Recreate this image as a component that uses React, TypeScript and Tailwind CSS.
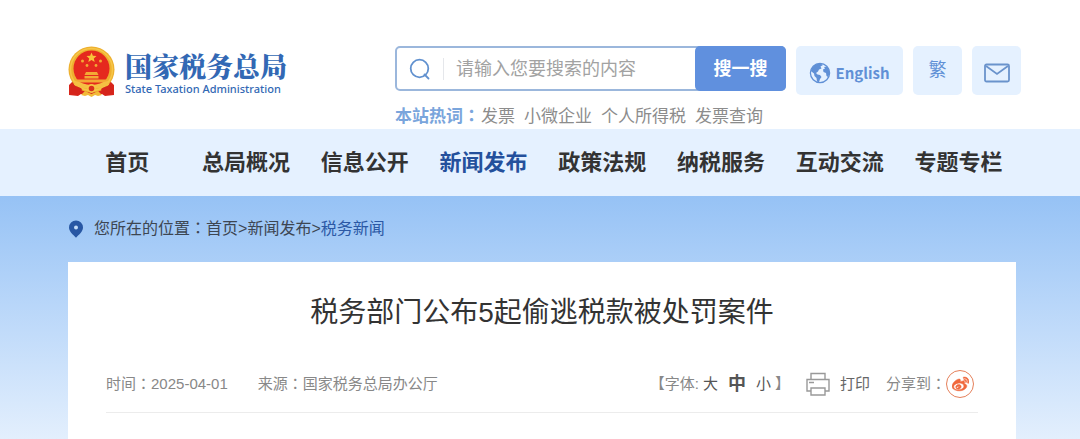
import clsx from "clsx";
import { type ReactNode } from "react";
import { FaWeibo } from "react-icons/fa";

interface NavItem {
  readonly label: string;
  readonly active?: boolean;
}

const NAV_ITEMS: NavItem[] = [
  { label: "首页" },
  { label: "总局概况" },
  { label: "信息公开" },
  { label: "新闻发布", active: true },
  { label: "政策法规" },
  { label: "纳税服务" },
  { label: "互动交流" },
  { label: "专题专栏" },
];

const HOT_WORDS = ["发票", "小微企业", "个人所得税", "发票查询"];

const Emblem = (): JSX.Element => (
  <svg viewBox="0 0 47 51" className="h-[51px] w-[47px] shrink-0" aria-hidden="true">
    <path d="M6 34 1 39v10l9 1 3-2h21l3 2 9-1V39l-5-5z" fill="#d8261c" />
    <circle cx="23.5" cy="23.5" r="23" fill="#eeb02f" />
    <circle cx="23.5" cy="23.5" r="21" fill="none" stroke="#f6c648" strokeWidth="1.5" />
    <circle cx="23.5" cy="22.5" r="18" fill="#e5291e" />
    <path d="m23.5 6.5 1.4 3.3 3.6.3-2.7 2.3.9 3.5-3.2-1.9-3.2 1.9.9-3.5-2.7-2.3 3.6-.3z" fill="#f8c33a" />
    <g fill="#f3a935">
      <circle cx="14.5" cy="15" r="1.5" />
      <circle cx="32.5" cy="15" r="1.5" />
      <circle cx="19" cy="19.5" r="1.4" />
      <circle cx="28" cy="19.5" r="1.4" />
      <path d="M18 26h11l1.5 3h-14zM16.5 30h14v2.5h-14zM9 33.5h29v3H9z" />
    </g>
    <path d="M7 35c6 1 10 4 16.5 4S34 36 40 35l1 4c-6 1-9 4-17.5 4S12 40 6 39z" fill="#f5c043" />
    <path d="M3 39c5 1 9 2 11 4l-3 6-9-1zM44 39c-5 1-9 2-11 4l3 6 9-1z" fill="#d5241b" />
    <circle cx="23.5" cy="42.5" r="3.6" fill="#d9301d" stroke="#f6c544" strokeWidth="1.6" />
    <path d="m13 49 4-4 6.5 3 6.5-3 4 4-4 1-3-1-3.5 2-3.5-2-3 1z" fill="#f2ba38" />
  </svg>
);

const SearchIcon = (): JSX.Element => (
  <svg
    viewBox="0 0 22 22"
    className="size-[22px] shrink-0"
    fill="none"
    stroke="#6191cf"
    strokeWidth="1.8"
    aria-hidden="true"
  >
    <circle cx="10.5" cy="10.5" r="8.8" />
    <path d="m15.5 16.5 4 4" strokeLinecap="round" />
  </svg>
);

const GlobeIcon = (): JSX.Element => (
  <svg viewBox="0 0 22 22" className="size-[22px] shrink-0" aria-hidden="true">
    <circle cx="11" cy="11" r="9.6" fill="none" stroke="#6090d6" strokeWidth="1.3" />
    <path
      d="M1.8 9C3 4.5 6.5 1.6 11.5 1.5L14 3l-2.5 1.500 1 2-2.500 1-1 2-2 1.500 1.500 1.500 2.500.5 1.500 2-1.500 2-1 3.200-2-.7-.5-3.500-2-2-.5-2.500z"
      fill="#6090d6"
    />
    <path d="m15 5 3-.5c2 2 2.700 4.500 2.500 7.500L19 15l-1.500-1-.5-3-2.500-1-.5-2.500 2-1z" fill="#6090d6" />
  </svg>
);

const MailIcon = (): JSX.Element => (
  <svg
    viewBox="0 0 26 20"
    className="h-5 w-[26px]"
    fill="none"
    stroke="#6a93cc"
    strokeWidth="1.8"
    aria-hidden="true"
  >
    <rect x="1" y="1.5" width="24" height="17" rx="1.5" />
    <path d="m2 3 11 8 11-8" />
  </svg>
);

const PinIcon = (): JSX.Element => (
  <svg viewBox="0 0 16 18" className="h-[18px] w-4 shrink-0" aria-hidden="true">
    <path d="M8 .5a7 7 0 0 0-7 7c0 4 4 7 7 10.3 3-3.3 7-6.3 7-10.3a7 7 0 0 0-7-7z" fill="#2857a4" />
    <circle cx="8" cy="7.5" r="2" fill="#c4dcf8" />
  </svg>
);

const PrinterIcon = (): JSX.Element => (
  <svg
    viewBox="0 0 24 24"
    className="size-6 shrink-0"
    fill="none"
    stroke="#999999"
    strokeWidth="1.4"
    aria-hidden="true"
  >
    <path d="M5 7V1.5h14V7M5 19H1V7.5h22V19h-4M3 10.5h5" />
    <path d="M5 16h14v7H5z" />
  </svg>
);

// The TC face centres the full-width colon in its box.
const Colon = (): JSX.Element => <span className="font-['Noto_Sans_CJK_TC',sans-serif] leading-none">：</span>;

interface ToolLinkProps {
  readonly label: string;
  readonly className?: string;
  readonly children: ReactNode;
}

const ToolLink = ({ label, className, children }: ToolLinkProps): JSX.Element => (
  <a
    href="#"
    aria-label={label}
    className={clsx(
      "flex h-[49px] shrink-0 items-center justify-center rounded-[5px] bg-[#e5f1ff] text-[#6090d6]",
      className,
    )}
  >
    {children}
  </a>
);

const Logo = (): JSX.Element => (
  <a href="#" className="flex shrink-0 gap-2.5">
    <Emblem />
    <span className="flex flex-col pt-1 text-[#3268b4]">
      <span className="font-['Noto_Serif_CJK_SC','Noto_Sans_CJK_SC',serif] text-[27px] leading-8 font-black">
        国家税务总局
      </span>
      <span className="font-['Noto_Sans',sans-serif] text-[11px] leading-[14px] font-medium">
        State Taxation Administration
      </span>
    </span>
  </a>
);

const SearchForm = (): JSX.Element => (
  <form className="flex h-[45px] rounded-[5px] border-2 border-[#9bb7dc]" onSubmit={e => e.preventDefault()}>
    <label htmlFor="keyword" className="flex items-center gap-3 pl-3">
      <SearchIcon />
      <span className="h-[22px] w-px bg-gray-200" />
    </label>
    <input
      id="keyword"
      type="text"
      aria-label="搜索"
      placeholder="请输入您要搜索的内容"
      className="min-w-0 flex-1 pl-3 text-[18px] leading-6 outline-none placeholder:text-[#a2a2a2]"
    />
    <button
      type="submit"
      className="-m-0.5 w-[91px] rounded-[5px] bg-[#6090de] text-[18px] leading-6 font-bold text-white"
    >
      搜一搜
    </button>
  </form>
);

const Header = (): JSX.Element => (
  <header className="flex items-start justify-between gap-4 pt-[46px] pr-[59px] pl-[68px]">
    <Logo />
    <div className="flex gap-2.5">
      <div className="flex w-[391px] flex-col gap-3.5">
        <SearchForm />
        <div className="flex text-[17px] leading-6 whitespace-nowrap">
          <span className="font-bold text-[#7aa5dc]">
            本站热词
            <Colon />
          </span>
          <div className="flex gap-[9px] pl-px text-[#8c8c8c]">
            {HOT_WORDS.map(word => (
              <a key={word} href="#">
                {word}
              </a>
            ))}
          </div>
        </div>
      </div>
      <ToolLink label="English" className="w-[107px] gap-1 pt-1">
        <GlobeIcon />
        <span className="font-['Noto_Sans_CJK_SC',sans-serif] text-[15px] leading-5 font-bold">English</span>
      </ToolLink>
      <ToolLink label="繁体" className="w-[49px] text-[18px]">
        繁
      </ToolLink>
      <ToolLink label="邮箱" className="w-[49px] pt-1">
        <MailIcon />
      </ToolLink>
    </div>
  </header>
);

const Nav = (): JSX.Element => (
  <nav className="bg-[#e5f1ff] pr-[62px] pl-[68px]">
    <ul className="flex">
      {NAV_ITEMS.map(({ label, active }) => (
        <li key={label} className="flex-1 text-center">
          <a
            href="#"
            className={clsx(
              "text-[22px] leading-[67px] font-bold whitespace-nowrap",
              active ? "text-[#24509c]" : "text-[#333333]",
            )}
          >
            {label}
          </a>
        </li>
      ))}
    </ul>
  </nav>
);

const Breadcrumb = (): JSX.Element => (
  <div className="flex items-center gap-2.5 py-5 text-[16px] leading-[26px] text-[#3d4652]">
    <PinIcon />
    <p>
      您所在的位置
      <Colon />
      <a href="#">首页</a>&gt;<a href="#">新闻发布</a>&gt;
      <a href="#" className="text-[#2b58a5]">
        税务新闻
      </a>
    </p>
  </div>
);

const ArticleMeta = (): JSX.Element => (
  <div className="flex items-center justify-between border-b border-[#ececec] pb-3 text-[15px] leading-8 whitespace-nowrap text-[#888888]">
    <div className="flex gap-[30px]">
      <span>
        时间
        <Colon />
        2025-04-01
      </span>
      <span>
        来源
        <Colon />
        国家税务总局办公厅
      </span>
    </div>
    <div className="flex items-center gap-4 pr-1">
      <div className="flex items-center">
        <span>【字体:</span>
        <div className="flex items-center gap-2.5 px-1 text-[#555555]">
          <button type="button">大</button>
          <button type="button" className="text-[18px] font-bold">
            中
          </button>
          <button type="button">小</button>
        </div>
        <span>】</span>
      </div>
      <button type="button" className="flex items-center gap-2.5 text-[#666666]">
        <PrinterIcon />
        打印
      </button>
      <div className="flex items-center">
        <span>
          分享到
          <Colon />
        </span>
        <a
          href="#"
          aria-label="微博"
          className="flex size-7 items-center justify-center rounded-full border border-[#e5805a] text-[#f0683c]"
        >
          <FaWeibo className="size-[17px]" stroke="currentColor" strokeWidth="14" />
        </a>
      </div>
    </div>
  </div>
);

export const App = (): JSX.Element => (
  <div className="flex min-h-screen flex-col bg-white font-['Liberation_Sans','Noto_Sans_CJK_SC',sans-serif]">
    <Header />
    <Nav />
    <main className="flex flex-1 flex-col bg-linear-to-b from-[#96c2f5] to-[#e3effd] pr-16 pl-[68px]">
      <Breadcrumb />
      <article className="flex flex-1 flex-col gap-[34px] bg-white px-[38px] pt-[30px]">
        <h1 className="text-center text-[28px] leading-[42px] text-[#333333]">税务部门公布5起偷逃税款被处罚案件</h1>
        <ArticleMeta />
      </article>
    </main>
  </div>
);

export default App;
